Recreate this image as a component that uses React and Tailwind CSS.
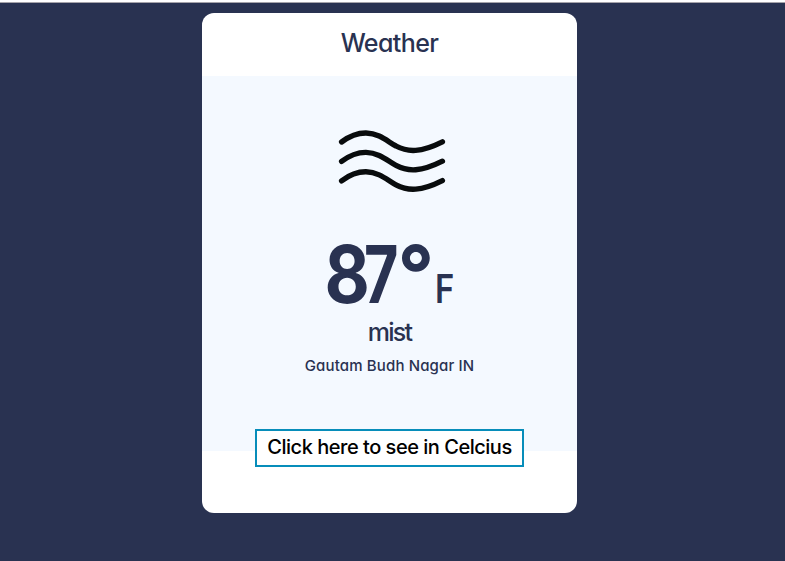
const fontStack = "font-['Inter','Liberation_Sans',sans-serif] [font-feature-settings:'cv11','ss03']";

function MistIcon() {
  const wave = "M341.6 142 C351 135 358 132.9 366 133 C380 133.4 388 142 396 146 C408 152.5 421 152.5 442.4 141.8";
  return (
    <svg className="mt-[54px] h-[64px] w-[108px] shrink-0" viewBox="338 130 108 64" fill="none" stroke="#090c0d" strokeWidth="5.4" strokeLinecap="round" aria-label="mist">
      <path d={wave} />
      <path d={wave} transform="translate(0 19.4)" />
      <path d={wave} transform="translate(0 38.8)" />
    </svg>
  );
}

export default function App() {
  return (
    <div className={`flex h-[561px] w-full flex-col items-center overflow-hidden bg-[#293251] text-[#293251] ${fontStack}`}>
      <div className="h-[3px] w-full shrink-0 border-b border-[#a5a3aa] bg-white" />
      <main className="mt-[10px] mr-[6px] flex h-[500px] w-[375px] flex-col overflow-hidden rounded-xl bg-white">
        <h1 className="flex h-[63px] shrink-0 items-center justify-center pb-[1px] text-[25px] font-medium tracking-[-0.6px]">Weather</h1>
        <section className="flex h-[375px] shrink-0 flex-col items-center bg-[#f4f9ff]">
          <div className="flex pl-[5px]"><MistIcon /></div>
          <div className="mt-[48px] flex h-[64px] w-[128px] items-end whitespace-nowrap">
            <span className="w-[38px] text-[80px] leading-[64px] font-bold"><span className="inline-block origin-left -translate-x-[1.5px] scale-x-[0.87]">8</span></span>
            <span className="w-[35px] text-[80px] leading-[64px] font-bold"><span className="inline-block origin-left scale-x-[0.74]">7</span></span>
            <span className="w-[37px] text-[80px] leading-[64px] font-bold"><span className="inline-block -translate-x-[1px]">°</span></span>
            <span className="text-[39px] leading-[34px] font-semibold"><span className="inline-block origin-left scale-x-[0.84]">F</span></span>
          </div>
          <p className="mt-[11px] text-[25px] leading-[30px] font-medium tracking-[-1.8px]">mist</p>
          <p className="mt-[9px] text-[15px] leading-[20px] font-medium tracking-[0.15px] whitespace-nowrap">Gautam Budh Nagar IN</p>
        </section>
        <button className="-mt-[22px] flex h-[38px] w-[269px] shrink-0 items-center justify-center self-center border-2 border-[#078dba] bg-white pb-[2px] text-[20px] font-medium tracking-[-0.48px] whitespace-nowrap text-black">
          Click here to see in Celcius
        </button>
      </main>
    </div>
  );
}
